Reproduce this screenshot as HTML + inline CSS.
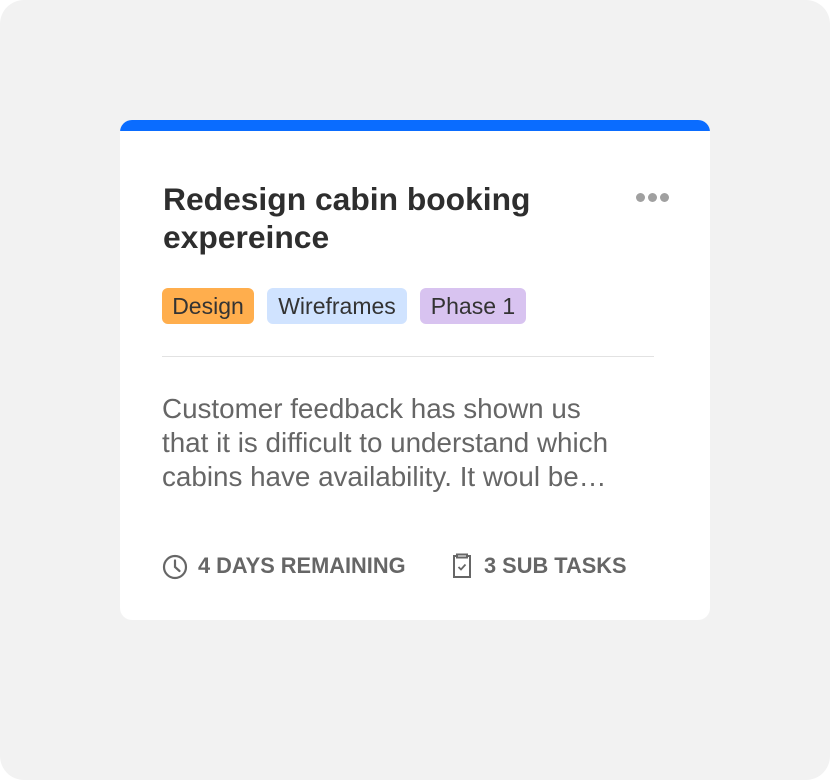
<!DOCTYPE html>
<html><head><style>
html,body{margin:0;padding:0;background:#fff;}
.bg{position:absolute;left:0;top:0;width:830px;height:780px;background:#f2f2f2;border-radius:24px;}
.card{position:absolute;left:120px;top:120px;width:590px;height:500px;background:#fff;border-radius:12px;overflow:hidden;font-family:"Liberation Sans",sans-serif;}
.bar{position:absolute;left:0;top:0;width:100%;height:11px;background:#0a6cff;}
.title{position:absolute;left:43px;top:60px;width:440px;font-size:31.8px;font-weight:bold;line-height:38px;color:#2e2e2e;}
.dots{position:absolute;left:636px;top:193px;}
.dots i{position:absolute;top:0;width:9px;height:9px;border-radius:50%;background:#a0a0a0;}
.tag{position:absolute;top:168px;height:36px;line-height:36px;border-radius:6px;font-size:23px;color:#333;text-align:center;}
.hr{position:absolute;left:42px;top:236px;width:492px;height:1px;background:#e2e2e2;}
.desc{position:absolute;left:42px;top:272px;white-space:nowrap;font-size:27.8px;line-height:34px;color:#666;}
.foot{position:absolute;top:434px;font-size:21.8px;font-weight:bold;color:#666;line-height:24px;}
svg{position:absolute;}
</style></head><body>
<div class="bg"></div>
<div class="card">
<div class="bar"></div>
<div class="title">Redesign cabin booking expereince</div>
<div class="tag" style="left:42px;width:92px;background:#ffae4d;">Design</div>
<div class="tag" style="left:147px;width:140px;background:#d0e3ff;">Wireframes</div>
<div class="tag" style="left:300px;width:106px;background:#d8c3f0;">Phase 1</div>
<div class="hr"></div>
<div class="desc">Customer feedback has shown us<br>that it is difficult to understand which<br>cabins have availability. It woul be…</div>
<svg style="left:42px;top:434px" width="26" height="26" viewBox="0 0 26 26"><circle cx="13" cy="13" r="11" fill="none" stroke="#666" stroke-width="2.2"/><path d="M13 6.5V13l4.5 4" fill="none" stroke="#666" stroke-width="2.2" stroke-linecap="round"/></svg>
<div class="foot" style="left:78px;">4 DAYS REMAINING</div>
<svg style="left:330px;top:432px" width="24" height="28" viewBox="0 0 24 28"><path d="M7 4H4v21h16V4h-3M7 2.5h10v3H7z" fill="none" stroke="#666" stroke-width="2"/><path d="M8.5 15l2.5 2.5 4.5-5" fill="none" stroke="#666" stroke-width="1.8"/></svg>
<div class="foot" style="left:364px;">3 SUB TASKS</div>
</div>
<div class="dots"><i style="left:0"></i><i style="left:12px"></i><i style="left:24px"></i></div>
</body></html>
